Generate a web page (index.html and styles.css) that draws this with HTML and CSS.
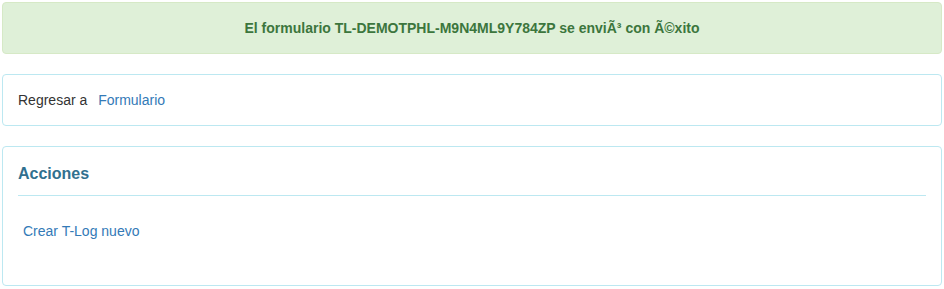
FILE: index.html
```html
<!DOCTYPE html>
<html lang="es">
<head>
  <meta charset="UTF-8" />
  <meta name="viewport" content="width=device-width, initial-scale=1.0"/>
  <title>Formulario enviado</title>
  <link rel="stylesheet" href="styles.css">
</head>
<body>
  <div class="contenedor">

    <!-- MENSAJE DE EXITO -->
    <div class="alerta-exito">
      El formulario TL-DEMOTPHL-M9N4ML9Y784ZP se enviÃ³ con Ã©xito
    </div>

    <!-- REGRESAR -->
    <div class="panel">
      <div class="panel-cuerpo">
        Regresar a <a href="#" class="enlace-regresar">Formulario</a>
      </div>
    </div>

    <!-- ACCIONES -->
    <div class="panel panel-ultimo">
      <div class="panel-cuerpo">
        <h4 class="titulo-panel">Acciones</h4>
        <hr class="separador">
        <ul class="lista-acciones">
          <li><a href="#">Crear T-Log nuevo</a></li>
        </ul>
      </div>
    </div>

  </div>
</body>
</html>
```

FILE: styles.css
```css
body {
  margin: 0;
  font-family: 'Liberation Sans', Arial, sans-serif;
  font-size: 14px;
  line-height: 20px;
  color: #333333;
  background-color: #ffffff;
}

a {
  color: #337ab7;
  text-decoration: none;
}

.contenedor {
  padding: 2px;
}

.alerta-exito {
  padding: 15px;
  margin-bottom: 20px;
  background-color: #dff0d8;
  border: 1px solid #d6e9c6;
  border-radius: 4px;
  color: #3c763d;
  font-weight: bold;
  text-align: center;
}

.panel {
  margin-bottom: 20px;
  background-color: #ffffff;
  border: 1px solid #bce8f1;
  border-radius: 4px;
}

.panel-ultimo {
  margin-bottom: 0;
}

.panel-cuerpo {
  padding: 15px;
}

.enlace-regresar {
  margin-left: 7px;
}

.titulo-panel {
  margin: 2px 0 0;
  font-size: 16px;
  line-height: 20px;
  font-weight: bold;
  color: #31708f;
}

.separador {
  margin: 11px 0 0;
  border: 0;
  border-top: 1px solid #bce8f1;
}

.lista-acciones {
  list-style: none;
  margin: 0;
  padding: 25px 0 29px 5px;
}
```
